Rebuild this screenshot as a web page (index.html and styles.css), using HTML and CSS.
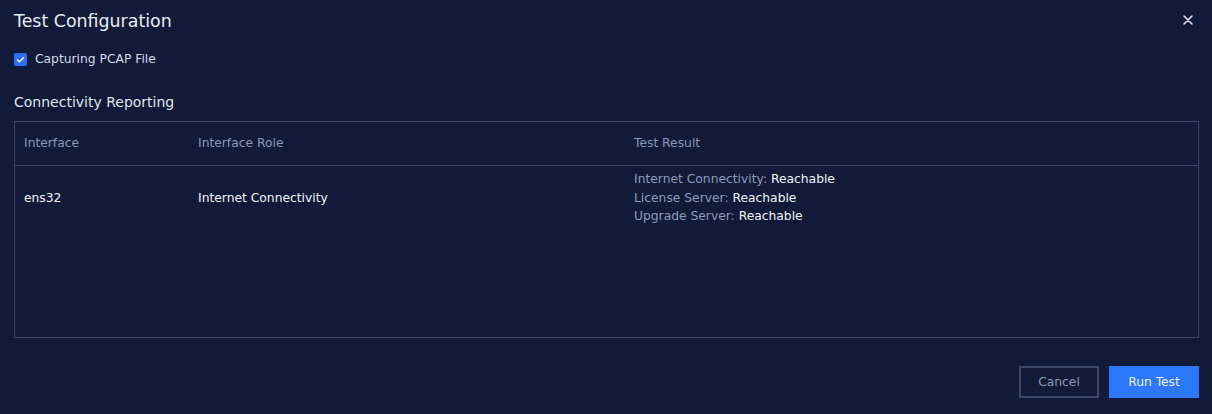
FILE: index.html
```html
<!DOCTYPE html>
<html>
<head>
<meta charset="utf-8">
<link rel="stylesheet" href="styles.css">
</head>
<body>
<div class="dialog">
  <div class="header">
    <h1 class="title">Test Configuration</h1>
    <button class="close" aria-label="Close">
      <svg width="10" height="10" viewBox="0 0 10 10"><path d="M1 1L9 9M9 1L1 9" stroke="#e6e9f2" stroke-width="1.6" stroke-linecap="round"/></svg>
    </button>
  </div>
  <label class="check">
    <span class="box"><svg width="9" height="7" viewBox="0 0 9 7"><path d="M1 3.6L3.4 5.8L8 1.2" fill="none" stroke="#fff" stroke-width="1.4"/></svg></span>
    <span>Capturing PCAP File</span>
  </label>
  <h2 class="section">Connectivity Reporting</h2>
  <div class="table">
    <div class="row head">
      <div class="c1">Interface</div>
      <div class="c2">Interface Role</div>
      <div class="c3">Test Result</div>
    </div>
    <div class="row body">
      <div class="c1 val">ens32</div>
      <div class="c2 val">Internet Connectivity</div>
      <div class="c3 results">
        <div><span class="lbl">Internet Connectivity:</span> <span class="val">Reachable</span></div>
        <div><span class="lbl">License Server:</span> <span class="val">Reachable</span></div>
        <div><span class="lbl">Upgrade Server:</span> <span class="val">Reachable</span></div>
      </div>
    </div>
  </div>
  <div class="footer">
    <button class="btn cancel">Cancel</button>
    <button class="btn primary">Run Test</button>
  </div>
</div>
</body>
</html>
```
FILE: styles.css
```css
html, body {
  margin: 0;
  padding: 0;
  background: #111a38;
  font-family: "DejaVu Sans", "Liberation Sans", sans-serif;
  color: #dfe4ee;
}
.dialog {
  width: 1212px;
  height: 414px;
  box-sizing: border-box;
  padding: 0 13px 0 14px;
  display: flex;
  flex-direction: column;
}
.header {
  display: flex;
  justify-content: space-between;
  align-items: center;
  height: 42px;
}
.title {
  margin: 0;
  font-size: 17.4px;
  font-weight: normal;
  color: #e8ecf4;
}
.close {
  background: none;
  border: 0;
  padding: 0;
  width: 12px;
  height: 12px;
  display: flex;
  align-items: center;
  justify-content: center;
  margin-right: 5px;
  margin-top: -2px;
}
.check {
  display: flex;
  align-items: center;
  gap: 8px;
  font-size: 12.3px;
  color: #d3d9e6;
  height: 34px;
}
.box {
  width: 13px;
  height: 13px;
  background: #2d6ff0;
  border-radius: 2px;
  display: flex;
  align-items: center;
  justify-content: center;
}
.section {
  margin: 0;
  font-size: 14px;
  font-weight: normal;
  color: #dfe4ee;
  height: 45px;
  box-sizing: border-box;
  padding-top: 7px;
  display: flex;
  align-items: center;
}
.table {
  border: 1px solid #3b4766;
  height: 217px;
  box-sizing: border-box;
}
.row {
  display: grid;
  grid-template-columns: 174px 436px 1fr;
  padding-left: 9px;
  font-size: 12.3px;
}
.row.head {
  height: 44px;
  box-sizing: border-box;
  padding-bottom: 2px;
  align-items: center;
  border-bottom: 1px solid #3b4766;
  color: #8797b6;
}
.row.body {
  align-items: center;
  padding-top: 4px;
}
.val { color: #f2f4f8; }
.lbl { color: #8c9bb8; }
.results { line-height: 18.5px; }
.footer {
  margin-top: 28px;
  display: flex;
  justify-content: flex-end;
  gap: 10px;
}
.btn {
  height: 32px;
  font-family: inherit;
  font-size: 12.3px;
  border-radius: 0;
}
.cancel {
  width: 80px;
  background: transparent;
  border: 2px solid #3b4766;
  color: #8a97b2;
}
.primary {
  width: 90px;
  background: #2d77fa;
  border: 1px solid #2d77fa;
  color: #eaf1ff;
}
```
